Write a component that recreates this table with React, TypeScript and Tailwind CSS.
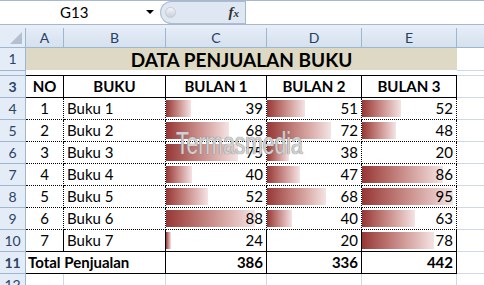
import React from "react";

const FONT = "font-['Lato','Liberation_Sans',sans-serif]";

const DATA = [
  { no: 1, name: "Buku 1", v: [39, 51, 52], bar: [25, 38, 39] },
  { no: 2, name: "Buku 2", v: [68, 72, 48], bar: [63, 64, 34] },
  { no: 3, name: "Buku 3", v: [75, 38, 20], bar: [72, 22, 0] },
  { no: 4, name: "Buku 4", v: [40, 47, 86], bar: [26, 33, 81] },
  { no: 5, name: "Buku 5", v: [52, 68, 95], bar: [42, 59, 91] },
  { no: 6, name: "Buku 6", v: [88, 40, 63], bar: [89, 25, 53] },
  { no: 7, name: "Buku 7", v: [24, 20, 78], bar: [5, 0, 72] },
];

const VAL_W = ["w-[101px]", "w-[95px]", "w-[95px]"];

function RowHead({ n, h }: { n?: number; h: string }) {
  return (
    <div
      className={`${h} flex w-[26px] shrink-0 items-center justify-center border-r border-b border-[#9eb6ce] bg-[#e4ecf7] text-[14px] text-[#2b4466]`}
    >
      {n}
    </div>
  );
}

function Filler({ h }: { h: string }) {
  return <div className={`${h} flex-1 border-b border-[#d0d7e5]`} />;
}

function BarCell({
  value,
  bar,
  width,
  bottom,
}: {
  value: number;
  bar: number;
  width: string;
  bottom: string;
}) {
  return (
    <div
      className={`relative flex h-[22px] ${width} shrink-0 items-center justify-end border-r border-black pr-[3px] ${bottom}`}
    >
      {bar > 0 && (
        <div
          className="absolute top-[2px] bottom-[2px] left-0 bg-gradient-to-r from-[#963636] to-[#f4e4e4]"
          style={{ width: bar }}
        />
      )}
      <span className="relative">{value}</span>
    </div>
  );
}

export default function App() {
  return (
    <div className={`relative h-[285px] w-[484px] overflow-hidden bg-white ${FONT} text-[15px] leading-none text-black`}>
      {/* formula bar */}
      <div className="flex h-[25px] border-t border-b border-[#a7b7cd] bg-white">
        <div className="relative flex w-[160px] items-center">
          <span className="pl-[60px] text-[15px] text-black">G13</span>
          <span className="absolute left-[146px] top-[9px] h-0 w-0 border-x-[4px] border-t-[4px] border-x-transparent border-t-black" />
        </div>
        <div className="flex w-[85px] items-center rounded-l-[12px] border border-r-0 border-[#aebcd0] bg-[#dfe7f2]">
          <span className="ml-[4px] h-[11px] w-[11px] rounded-full border border-[#c4ccd6] bg-gradient-to-b from-[#f4f6f9] to-[#c8cfd8]" />
          <span className="ml-auto mr-[6px] font-['Liberation_Serif',serif] text-[15px] font-bold italic text-[#333]">
            f<span className="text-[11px]">x</span>
          </span>
        </div>
        <div className="flex-1 border-l border-[#a7b7cd] bg-white" />
      </div>
      <div className="h-[3px] bg-[#e8eef7]" />

      {/* column headers */}
      <div className="flex h-[20px] text-[14px] text-[#27405f]">
        <div className="relative w-[26px] shrink-0 border-r border-b border-[#9eb6ce] bg-[#e4ecf7]">
          <span className="absolute right-[3px] bottom-[3px] h-0 w-0 border-b-[12px] border-l-[12px] border-l-transparent border-b-[#b4c0cf]" />
        </div>
        {[
          ["A", "w-[38px]"],
          ["B", "w-[102px]"],
          ["C", "w-[101px]"],
          ["D", "w-[95px]"],
          ["E", "w-[95px]"],
        ].map(([l, w]) => (
          <div
            key={l}
            className={`${w} flex shrink-0 items-center justify-center border-r border-b border-[#9eb6ce] bg-gradient-to-b from-[#e4ecf7] to-[#d6e1ef]`}
          >
            {l}
          </div>
        ))}
        <div className="flex-1 border-b border-[#9eb6ce] bg-gradient-to-b from-[#e4ecf7] to-[#d6e1ef]" />
      </div>

      {/* row 1 title */}
      <div className="flex h-[23px]">
        <RowHead n={1} h="h-[23px]" />
        <div className="flex h-[23px] w-[431px] shrink-0 items-center justify-center border-b border-white bg-[#ddd9c4] text-[19px] font-bold">
          DATA PENJUALAN BUKU
        </div>
        <Filler h="h-[23px]" />
      </div>

      {/* row 2 */}
      <div className="flex h-[5px]">
        <RowHead h="h-[5px]" />
        <div className="h-[5px] w-[431px] shrink-0 border-b border-black" />
        <Filler h="h-[5px]" />
      </div>

      {/* row 3 headers */}
      <div className="flex h-[22px] font-bold">
        <RowHead n={3} h="h-[22px]" />
        <div className="flex h-[22px] w-[38px] shrink-0 items-center justify-center border-r border-b border-black">NO</div>
        <div className="flex h-[22px] w-[102px] shrink-0 items-center justify-center border-r border-b border-black">BUKU</div>
        <div className="flex h-[22px] w-[101px] shrink-0 items-center justify-center border-r border-b border-black">BULAN 1</div>
        <div className="flex h-[22px] w-[95px] shrink-0 items-center justify-center border-r border-b border-black">BULAN 2</div>
        <div className="flex h-[22px] w-[95px] shrink-0 items-center justify-center border-r border-b border-black">BULAN 3</div>
        <Filler h="h-[22px]" />
      </div>

      {/* data rows */}
      {DATA.map((r, i) => {
        const bottom = i === DATA.length - 1 ? "border-b border-b-black" : "border-b border-dotted border-b-black";
        return (
          <div key={r.no} className="flex h-[22px]">
            <RowHead n={i + 4} h="h-[22px]" />
            <div className={`flex h-[22px] w-[38px] shrink-0 items-center justify-center border-r border-r-black ${bottom}`}>
              {r.no}
            </div>
            <div className={`flex h-[22px] w-[102px] shrink-0 items-center border-r border-r-black pl-[3px] ${bottom}`}>
              {r.name}
            </div>
            {r.v.map((v, j) => (
              <BarCell key={j} value={v} bar={r.bar[j]} width={VAL_W[j]} bottom={bottom} />
            ))}
            <Filler h="h-[22px]" />
          </div>
        );
      })}

      {/* total row */}
      <div className="flex h-[22px] font-bold">
        <RowHead n={11} h="h-[22px]" />
        <div className="flex h-[22px] w-[140px] shrink-0 items-center border-r border-b border-black pl-[2px]">
          Total Penjualan
        </div>
        {[386, 336, 442].map((t, j) => (
          <div
            key={t}
            className={`flex h-[22px] ${VAL_W[j]} shrink-0 items-center justify-end border-r border-b border-black pr-[3px]`}
          >
            {t}
          </div>
        ))}
        <Filler h="h-[22px]" />
      </div>

      {/* row 12 */}
      <div className="flex h-[22px]">
        <RowHead n={12} h="h-[22px]" />
        <div className="h-[22px] w-[38px] shrink-0 border-r border-[#d0d7e5]" />
        <div className="h-[22px] w-[102px] shrink-0 border-r border-[#d0d7e5]" />
        <div className="h-[22px] w-[101px] shrink-0 border-r border-[#d0d7e5]" />
        <div className="h-[22px] w-[95px] shrink-0 border-r border-[#d0d7e5]" />
        <div className="h-[22px] w-[95px] shrink-0 border-r border-[#d0d7e5]" />
      </div>

      {/* watermark */}
      <div className="pointer-events-none absolute top-[127px] left-[176px] origin-left scale-x-[0.66] font-['Liberation_Sans',sans-serif] text-[32px] text-white/65 [text-shadow:0_0_1px_#7a7a7a,0_0_1px_#7a7a7a]">
        Termasmedia
      </div>
    </div>
  );
}
